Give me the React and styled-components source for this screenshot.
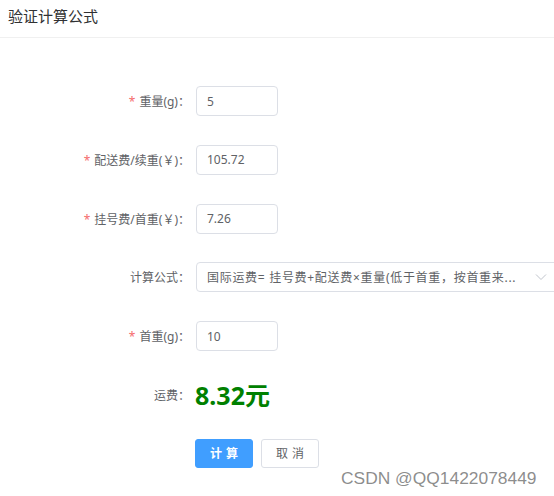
import React from "react";
import styled, { createGlobalStyle } from "styled-components";

const Global = createGlobalStyle`
  html, body { margin: 0; padding: 0; background: #fff; overflow: hidden; }
  body { font-family: "Noto Sans", "Noto Sans CJK SC", sans-serif; }
`;

const Page = styled.div`
  position: relative;
  width: 554px;
  height: 496px;
  overflow: hidden;
`;

const Header = styled.div`
  height: 38px;
  display: flex;
  align-items: center;
  padding: 0 8px;
  border-bottom: 1px solid #f0f0f0;
  box-sizing: border-box;
`;

const Title = styled.div`
  font-size: 15px;
  color: #303133;
  line-height: 20px;
  margin-top: -5px;
`;

const Form = styled.div`
  display: flex;
  flex-direction: column;
  gap: 28.75px;
  padding-top: 48px;
`;

const Row = styled.div`
  display: grid;
  grid-template-columns: 196px 1fr;
  align-items: center;
  height: 30px;
`;

const Label = styled.div`
  text-align: right;
  padding-right: 6px;
  font-size: 12px;
  color: #606266;
  white-space: nowrap;
`;

const Star = styled.span`
  color: #f56c6c;
  margin-right: 4px;
`;

const Input = styled.div`
  box-sizing: border-box;
  width: ${(p) => p.$w || 82}px;
  height: 30px;
  border: 1px solid #dcdfe6;
  border-radius: 4px;
  padding: 0 ${(p) => (p.$select ? 30 : 10)}px 0 10px;
  display: flex;
  align-items: center;
  font-size: 12px;
  color: #606266;
  position: relative;
  white-space: nowrap;
  overflow: hidden;
`;

const SelectText = styled.span`
  overflow: hidden;
  white-space: nowrap;
  display: block;
  letter-spacing: 0.7px;
`;

const Arrow = styled.svg`
  position: absolute;
  right: 10px;
  top: 50%;
  margin-top: -5px;
`;

const Amount = styled.div`
  font-size: 25px;
  font-weight: 700;
  color: #008000;
  line-height: 30px;
  margin-left: -1px;
`;

const Buttons = styled.div`
  display: flex;
  gap: 8px;
  padding-left: 195px;
`;

const Button = styled.button`
  box-sizing: border-box;
  width: 58px;
  height: 29px;
  border-radius: 3px;
  font-size: 12px;
  font-family: inherit;
  letter-spacing: 4px;
  text-indent: 4px;
  border: 1px solid ${(p) => (p.$primary ? "#409eff" : "#dcdfe6")};
  background: ${(p) => (p.$primary ? "#409eff" : "#fff")};
  color: ${(p) => (p.$primary ? "#fff" : "#606266")};
  font-weight: ${(p) => (p.$primary ? 700 : 400)};
  padding: 0;
`;

const Watermark = styled.div`
  position: absolute;
  left: 341px;
  top: 468px;
  font-family: "Liberation Sans", Arial, sans-serif;
  font-size: 17.4px;
  color: rgba(120, 120, 120, 0.85);
  white-space: nowrap;
`;

const fields = [
  { label: "重量(g)", value: "5", req: true },
  { label: "配送费/续重(￥)", value: "105.72", req: true },
  { label: "挂号费/首重(￥)", value: "7.26", req: true },
];

export default function App() {
  return (
    <Page>
      <Global />
      <Header>
        <Title>验证计算公式</Title>
      </Header>
      <Form>
        {fields.map((f) => (
          <Row key={f.label}>
            <Label>
              {f.req && <Star>*</Star>}
              {f.label}：
            </Label>
            <Input>{f.value}</Input>
          </Row>
        ))}
        <Row>
          <Label>计算公式：</Label>
          <Input $w={362} $select>
            <SelectText>国际运费= 挂号费+配送费×重量(低于首重，按首重来...</SelectText>
            <Arrow width="12" height="10" viewBox="0 0 12 10">
              <path d="M1 2.5 L6 7.5 L11 2.5" fill="none" stroke="#c0c4cc" strokeWidth="1" />
            </Arrow>
          </Input>
        </Row>
        <Row>
          <Label>
            <Star>*</Star>首重(g)：
          </Label>
          <Input>10</Input>
        </Row>
        <Row>
          <Label>运费：</Label>
          <Amount>8.32元</Amount>
        </Row>
        <Buttons>
          <Button $primary>计算</Button>
          <Button>取消</Button>
        </Buttons>
      </Form>
      <Watermark>CSDN @QQ1422078449</Watermark>
    </Page>
  );
}
